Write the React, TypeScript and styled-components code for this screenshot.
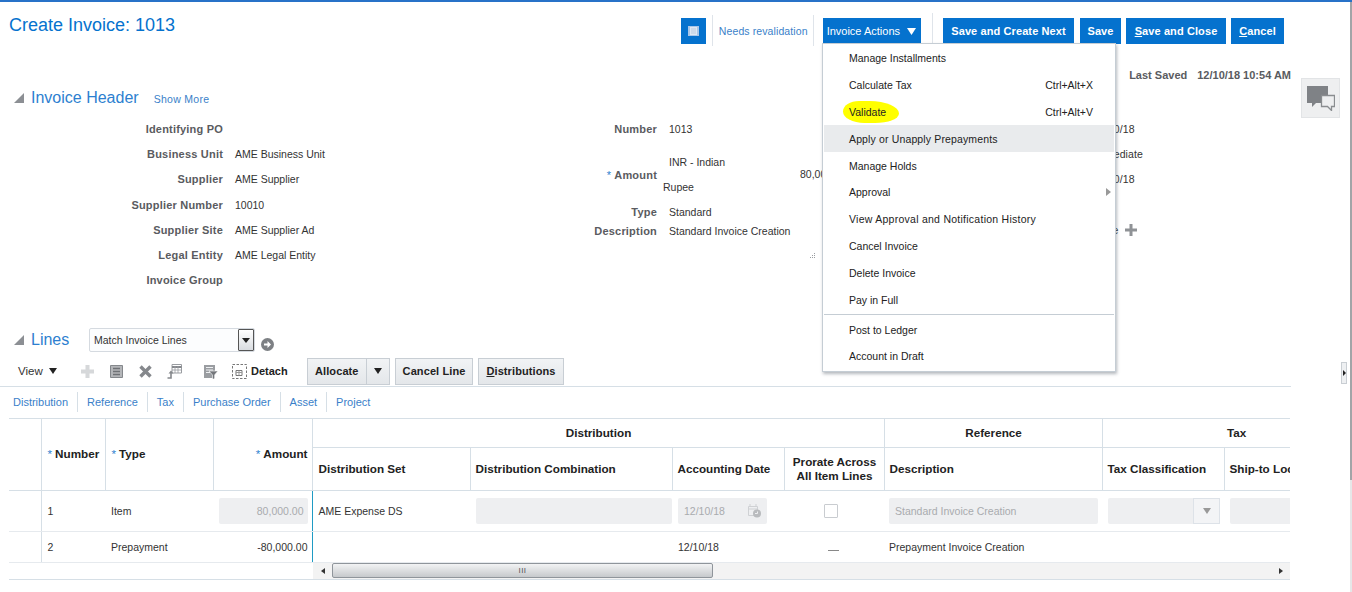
import React from "react";
import styled, { createGlobalStyle } from "styled-components";

const Global = createGlobalStyle`
  html, body { margin: 0; padding: 0; background: #fff; }
  body { font-family: "Liberation Sans", Arial, sans-serif; font-size: 11px; color: #333; }
`;

const Page = styled.div`
  position: relative;
  width: 1352px;
  height: 592px;
  overflow: hidden;
  border-top: 2px solid #2872c8;
  box-sizing: border-box;
`;

const Main = styled.div`
  width: 1291px;
`;

const TitleBar = styled.div`
  display: flex;
  height: 44px;
`;

const Title = styled.h1`
  margin: 13px 0 0 9px;
  font-size: 18px;
  line-height: 20px;
  font-weight: 400;
  color: #0572ce;
`;

const Actions = styled.div`
  margin-left: auto;
  margin-right: 7px;
  padding-top: 16px;
  display: flex;
  align-items: flex-start;
`;

const BlueButton = styled.button<{ $ml?: number; $w: number }>`
  height: 26px;
  width: ${(p) => p.$w}px;
  padding: 0;
  margin-left: ${(p) => p.$ml ?? 6}px;
  background: #0572ce;
  border: 0;
  color: #fff;
  font: 700 11px "Liberation Sans", Arial, sans-serif;
  letter-spacing: 0.1px;
  white-space: nowrap;
`;

const IconButton = styled.button`
  width: 25px;
  height: 26px;
  padding: 0;
  background: #0572ce;
  border: 0;
  display: flex;
  align-items: center;
  justify-content: center;
`;

const Status = styled.div`
  margin-left: 6px;
  height: 31px;
  padding: 0 5px 0 6px;
  display: flex;
  align-items: center;
  border-left: 1px solid #dfe4ea;
  border-right: 1px solid #dfe4ea;
  color: #3a7fc9;
  font-size: 10.5px;
  letter-spacing: 0.1px;
  margin-top: -3px;
`;

const MenuButton = styled.button`
  height: 26px;
  margin-left: 9px;
  padding: 0 5px 0 4px;
  display: flex;
  align-items: center;
  gap: 7px;
  background: #0572ce;
  border: 0;
  color: #fff;
  font: 400 11px "Liberation Sans", Arial, sans-serif;
`;

const Divider = styled.div`
  width: 1px;
  height: 36px;
  margin: -5px 0 0 11px;
  background: #dfe4ea;
`;

const SavedRow = styled.div`
  display: flex;
  justify-content: flex-end;
  height: 26px;
  margin-top: 16px;
  align-items: center;
  gap: 10px;
  font-weight: 700;
  color: #5a5b60;
  white-space: nowrap;
`;

const SectionHead = styled.div`
  display: flex;
  align-items: center;
  padding-left: 14px;
`;

const Disclosure = styled.span`
  width: 0;
  height: 0;
  border-style: solid;
  border-width: 0 0 10px 10px;
  border-color: transparent transparent #8c8f94 transparent;
`;

const SectionTitle = styled.h2`
  margin: 0 0 0 7px;
  font-size: 16px;
  line-height: 20px;
  font-weight: 400;
  color: #2d7fd0;
`;

const ShowMore = styled.a`
  margin-left: 15px;
  padding-top: 2px;
  font-size: 10.5px;
  color: #3a7fc9;
  letter-spacing: 0.3px;
`;

const FormGrid = styled.div`
  display: grid;
  grid-template-columns: 434px 424px 1fr;
  height: 219px;
  padding-top: 8.4px;
  box-sizing: border-box;
`;

const FormCol = styled.div`
  display: flex;
  flex-direction: column;
`;

const FormRow = styled.div<{ $h?: number }>`
  display: grid;
  grid-template-columns: 223px 1fr;
  column-gap: 12px;
  align-items: center;
  height: ${(p) => p.$h ?? 25.2}px;
  white-space: nowrap;
`;

const Label = styled.div`
  text-align: right;
  font-weight: 700;
  color: #5a5b60;
  letter-spacing: 0.2px;
`;

const AmountLabel = styled(Label)`
  padding-top: 2px;
`;

const Required = styled.span`
  color: #2d7fd0;
  font-weight: 400;
  margin-right: 3px;
`;

const Value = styled.div`
  color: #333;
  font-size: 10.5px;
`;

const AmountValue = styled.div`
  position: relative;
  margin-top: 3px;
  line-height: 25px;
  height: 50px;
  font-size: 10.5px;
`;

const CurrencyLine = styled.div<{ $out?: boolean }>`
  margin-left: ${(p) => (p.$out ? -6 : 0)}px;
`;

const AmountNumber = styled.span`
  position: absolute;
  left: 131px;
  top: 12px;
`;

const ThirdCol = styled(FormCol)`
  padding-left: 235px;
  font-size: 10.5px;
`;

const ThirdValue = styled.div`
  height: 25.2px;
  display: flex;
  align-items: center;
  gap: 6px;
  white-space: nowrap;
  letter-spacing: 0.1px;
`;

const Grip = styled.svg`
  position: absolute;
  left: 808px;
  top: 250px;
`;

const LinesHead = styled.div`
  display: flex;
  align-items: center;
  height: 26px;
  padding-left: 14px;
`;

const LinesTitle = styled.h2`
  margin: 0 0 0 7px;
  width: 58px;
  font-size: 16px;
  line-height: 20px;
  font-weight: 400;
  color: #2d7fd0;
`;

const SelectBox = styled.div`
  width: 166px;
  height: 24px;
  box-sizing: border-box;
  border: 1px solid #d5dae0;
  border-radius: 2px;
  display: flex;
  align-items: center;
  justify-content: space-between;
  padding-left: 4px;
  background: #fcfdfe;
  font-size: 10.5px;
  color: #333;
`;

const SelectArrow = styled.span`
  width: 16px;
  height: 22px;
  box-sizing: border-box;
  border: 1px solid #555;
  border-radius: 1px;
  background: linear-gradient(#fff, #d9dce0);
  display: flex;
  align-items: center;
  justify-content: center;
  &::after {
    content: "";
    border-style: solid;
    border-width: 5px 4px 0;
    border-color: #222 transparent transparent;
  }
`;

const GoIcon = styled.svg`
  margin: 8px 0 0 6px;
`;

const Toolbar = styled.div`
  display: flex;
  align-items: center;
  height: 28px;
  margin-top: 4px;
  padding: 0 0 1px 18px;
  border-bottom: 1px solid #d6dfe6;
  box-sizing: content-box;
`;

const ViewMenu = styled.div`
  display: flex;
  align-items: center;
  gap: 6px;
  width: 62px;
  color: #333;
  font-size: 11.5px;
`;

const Caret = styled.span`
  border-style: solid;
  border-width: 6px 4px 0;
  border-color: #222 transparent transparent;
  display: inline-block;
`;

const ToolIcon = styled.svg<{ $mr?: number }>`
  width: 15px;
  height: 15px;
  flex: none;
  margin-right: ${(p) => p.$mr ?? 14}px;
`;

const Detach = styled.div`
  display: flex;
  align-items: center;
  gap: 4px;
  font-weight: 700;
  color: #222;
  width: 74px;
`;

const GreyButton = styled.button<{ $ml?: number }>`
  height: 27px;
  padding: 0 7px;
  margin-left: ${(p) => p.$ml ?? 5}px;
  box-sizing: border-box;
  background: linear-gradient(#f1f3f5, #e4e7ea);
  border: 1px solid #c8ced4;
  font: 700 11px "Liberation Sans", Arial, sans-serif;
  letter-spacing: 0.1px;
  color: #222;
  display: flex;
  align-items: center;
`;

const SplitArrow = styled.span`
  display: flex;
  align-items: center;
  height: 100%;
  margin-left: 7px;
  padding-left: 7px;
  border-left: 1px solid #c8ced4;
`;

const TabLinks = styled.div`
  display: flex;
  align-items: center;
  height: 29px;
  padding: 0 0 2px 4px;
`;

const TabLink = styled.a`
  padding: 0 9px;
  height: 20px;
  line-height: 20px;
  font-size: 11px;
  color: #3a7fc9;
  border-left: 1px solid #d6dfe6;
  &:first-child { border-left: 0; }
`;

const TableWrap = styled.div`
  margin-left: 9px;
  width: 1281px;
  overflow: hidden;
  border-top: 1px solid #d6dfe6;
`;

const Table = styled.table`
  width: 1361px;
  table-layout: fixed;
  border-collapse: collapse;
`;

const HeadRow = styled.tr<{ $h: number }>`
  height: ${(p) => p.$h}px;
`;

const Th = styled.th<{ $align?: string; $pl?: number }>`
  border: 1px solid #d6dfe6;
  border-top: 0;
  font: 700 11.7px/14px "Liberation Sans", Arial, sans-serif;
  color: #222;
  padding: 0 4px 0 ${(p) => p.$pl ?? 5}px;
  text-align: ${(p) => p.$align ?? "left"};
  white-space: nowrap;
  overflow: hidden;
  &:first-child { border-left: 0; }
`;

const Td = styled.td<{ $align?: string; $flushRight?: boolean; $pl?: number }>`
  border: 0;
  border-bottom: 1px solid #e6eaee;
  padding: 0 ${(p) => (p.$flushRight ? 0 : 4)}px 0 ${(p) => p.$pl ?? 6}px;
  font-size: 10.5px;
  color: #333;
  text-align: ${(p) => p.$align ?? "left"};
  white-space: nowrap;
  overflow: hidden;
  &:nth-child(2) { border-left: 1px solid #d6dfe6; }
`;

const FreezeTd = styled(Td)`
  border-left: 1px solid #1f9bc4;
`;

const DisabledField = styled.div<{ $w?: number; $align?: string }>`
  height: 26px;
  width: ${(p) => (p.$w ? `${p.$w}px` : "100%")};
  box-sizing: border-box;
  background: #eeeff1;
  border-radius: 2px;
  color: #a9abae;
  display: flex;
  align-items: center;
  justify-content: ${(p) => p.$align ?? "flex-start"};
  padding: 0 4px 0 6px;
`;

const CalendarIcon = styled.svg`
  margin-left: auto;
  margin-right: 2px;
`;

const CheckBox = styled.span`
  display: block;
  width: 12px;
  height: 12px;
  margin-left: 34px;
  border: 1px solid #c9ccd0;
  border-radius: 1px;
  background: #fff;
`;

const Dash = styled.span`
  display: block;
  width: 11px;
  height: 1px;
  margin: 7px 0 0 38px;
  background: #888;
`;

const DropChoice = styled.span`
  margin-left: auto;
  width: 27px;
  height: 26px;
  margin-right: -4px;
  border: 1px solid #dde2e8;
  box-sizing: border-box;
  background: #f3f4f6;
  display: flex;
  align-items: center;
  justify-content: center;
  &::after {
    content: "";
    border-style: solid;
    border-width: 6px 4px 0;
    border-color: #999 transparent transparent;
  }
`;

const ScrollRow = styled.div`
  margin-left: 9px;
  width: 1281px;
  height: 17px;
  box-sizing: border-box;
  padding-left: 304px;
  border-bottom: 1px solid #d6dfe6;
`;

const ScrollTrack = styled.div`
  height: 16px;
  display: flex;
  align-items: center;
  background: #f3f3f3;
`;

const ScrollEnd = styled.span<{ $right?: boolean }>`
  width: 19px;
  margin-left: ${(p) => (p.$right ? "auto" : "0")};
  display: flex;
  justify-content: center;
  &::after {
    content: "";
    border-style: solid;
    border-width: ${(p) => (p.$right ? "3px 0 3px 4px" : "3px 4px 3px 0")};
    border-color: ${(p) => (p.$right ? "transparent transparent transparent #333" : "transparent #333 transparent transparent")};
  }
`;

const ScrollThumb = styled.div`
  width: 381px;
  height: 15px;
  box-sizing: border-box;
  border: 1px solid #8f959b;
  border-radius: 2px;
  background: linear-gradient(#f2f3f4, #c6c9cc);
  display: flex;
  align-items: center;
  justify-content: center;
  color: #555;
  font-size: 8px;
  letter-spacing: 0.5px;
`;

const Menu = styled.div`
  position: absolute;
  left: 822px;
  top: 41px;
  width: 294px;
  height: 329px;
  box-sizing: border-box;
  background: #fff;
  border: 1px solid #c5cdd4;
  box-shadow: 1px 2px 3px rgba(90, 100, 110, 0.45);
  padding: 1px 1px 0;
  color: #222;
`;

const MenuItem = styled.div<{ $active?: boolean; $h?: number; $ls?: number }>`
  position: relative;
  height: ${(p) => p.$h ?? 26.8}px;
  display: flex;
  align-items: center;
  justify-content: space-between;
  padding: 0 21px 0 25px;
  background: ${(p) => (p.$active ? "#e9ebed" : "transparent")};
  font-size: 10.5px;
  letter-spacing: ${(p) => p.$ls ?? 0}px;
  white-space: nowrap;
`;

const Highlighted = styled.span`
  position: relative;
  z-index: 0;
  &::before {
    content: "";
    position: absolute;
    z-index: -1;
    left: -6px;
    top: -5px;
    width: 56px;
    height: 22px;
    border-radius: 30% 55% 45% 40% / 50% 60% 45% 55%;
    background: #ffff00;
  }
`;

const SubArrow = styled.span`
  position: absolute;
  right: 3px;
  top: 9px;
  border-style: solid;
  border-width: 4px 0 4px 5px;
  border-color: transparent transparent transparent #999;
`;

const MenuSep = styled.div`
  height: 1px;
  background: #c5cdd4;
  margin: 1px 0 2px;
`;

const CommentButton = styled.div`
  position: absolute;
  left: 1301px;
  top: 76px;
  width: 39px;
  height: 40px;
  box-sizing: border-box;
  background: #eeeff0;
  border: 1px solid #e2e4e6;
  display: flex;
  align-items: center;
  justify-content: center;
`;

const SplitterHandle = styled.div`
  position: absolute;
  left: 1341px;
  top: 360px;
  width: 6px;
  height: 22px;
  box-sizing: border-box;
  background: #eef0f2;
  border: 1px solid #c9ced3;
  display: flex;
  align-items: center;
  justify-content: center;
  &::after {
    content: "";
    border-style: solid;
    border-width: 3px 0 3px 3px;
    border-color: transparent transparent transparent #222;
  }
`;

const WindowEdge = styled.div`
  position: absolute;
  left: 1349px;
  top: -2px;
  bottom: 0;
  width: 2px;
  border-left: 1px solid #fff;
  background: linear-gradient(#a2a4a7 0, #a2a4a7 480px, #e6e7e8 480px);
`;

const leftRows: [string, string][] = [
  ["Identifying PO", ""],
  ["Business Unit", "AME Business Unit"],
  ["Supplier", "AME Supplier"],
  ["Supplier Number", "10010"],
  ["Supplier Site", "AME Supplier Ad"],
  ["Legal Entity", "AME Legal Entity"],
  ["Invoice Group", ""],
];

const tabs = ["Distribution", "Reference", "Tax", "Purchase Order", "Asset", "Project"];
const colWidths = [32, 64, 108, 99, 158, 202, 112, 100, 218, 122, 146];

export default function App() {
  return (
    <Page>
      <Global />
      <Main>
        <TitleBar>
          <Title>Create Invoice: 1013</Title>
          <Actions>
            <IconButton aria-label="Layout">
              <svg width="11" height="10" viewBox="0 0 11 10">
                <rect width="11" height="10" fill="#a9c6e8" />
                <rect x="2" y="1" width="7" height="8" fill="#dfe8f3" />
                <path d="M3 3h5M3 5h5M3 7h5" stroke="#b9cbe0" />
              </svg>
            </IconButton>
            <Status>Needs revalidation</Status>
            <MenuButton>
              Invoice Actions
              <svg width="9" height="7" viewBox="0 0 9 7"><path d="M0 0h9L4.5 7z" fill="#fff" /></svg>
            </MenuButton>
            <Divider />
            <BlueButton $ml={10} $w={131}>Save and Create Next</BlueButton>
            <BlueButton $w={41}>Save</BlueButton>
            <BlueButton $ml={5} $w={100}><u>S</u>ave and Close</BlueButton>
            <BlueButton $ml={5} $w={53}><u>C</u>ancel</BlueButton>
          </Actions>
        </TitleBar>

        <SavedRow>
          <span>Last Saved</span>
          <span>12/10/18 10:54 AM</span>
        </SavedRow>

        <SectionHead>
          <Disclosure />
          <SectionTitle>Invoice Header</SectionTitle>
          <ShowMore>Show More</ShowMore>
        </SectionHead>

        <FormGrid>
          <FormCol>
            {leftRows.map(([l, v]) => (
              <FormRow key={l}>
                <Label>{l}</Label>
                <Value>{v}</Value>
              </FormRow>
            ))}
          </FormCol>
          <FormCol>
            <FormRow>
              <Label>Number</Label>
              <Value>1013</Value>
            </FormRow>
            <FormRow $h={64}>
              <AmountLabel><Required>*</Required>Amount</AmountLabel>
              <AmountValue>
                <CurrencyLine>INR - Indian</CurrencyLine>
                <CurrencyLine $out>Rupee</CurrencyLine>
                <AmountNumber>80,000.00</AmountNumber>
              </AmountValue>
            </FormRow>
            <FormRow $h={13}>
              <Label>Type</Label>
              <Value>Standard</Value>
            </FormRow>
            <FormRow $h={25}>
              <Label>Description</Label>
              <Value>Standard Invoice Creation</Value>
            </FormRow>
          </FormCol>
          <ThirdCol>
            <ThirdValue>12/10/18</ThirdValue>
            <ThirdValue>Immediate</ThirdValue>
            <ThirdValue>12/10/18</ThirdValue>
            <ThirdValue />
            <ThirdValue>
              None
              <svg width="12" height="12" viewBox="0 0 12 12"><path d="M4.5 0h3v4.5H12v3H7.5V12h-3V7.5H0v-3h4.5z" fill="#8f9296" /></svg>
            </ThirdValue>
          </ThirdCol>
        </FormGrid>

        <LinesHead>
          <Disclosure />
          <LinesTitle>Lines</LinesTitle>
          <SelectBox>
            Match Invoice Lines
            <SelectArrow />
          </SelectBox>
          <GoIcon width="13" height="13" viewBox="0 0 13 13">
            <circle cx="6.5" cy="6.5" r="6.5" fill="#7d8084" />
            <path d="M3 5.5h3.5V3l3.5 3.5L6.5 10V7.5H3z" fill="#fff" />
          </GoIcon>
        </LinesHead>

        <Toolbar>
          <ViewMenu>View <Caret /></ViewMenu>
          <ToolIcon viewBox="0 0 15 15">
            <path d="M5.5 1h4v4.5H14v4H9.5V14h-4V9.5H1v-4h4.5z" fill="#d6d8da" />
          </ToolIcon>
          <ToolIcon viewBox="0 0 15 15">
            <path d="M1.5 1.5h12v12h-12z" fill="#b4b6b9" stroke="#85888c" />
            <path d="M4 4.5h7M4 7.5h7M4 10.5h7" stroke="#6f7276" strokeWidth="1.3" />
          </ToolIcon>
          <ToolIcon viewBox="0 0 15 15">
            <path d="M2.5 2.5l10 10M12.5 2.5l-10 10" stroke="#85888c" strokeWidth="3.4" />
          </ToolIcon>
          <ToolIcon viewBox="0 0 15 15" $mr={21}>
            <path d="M5 .5h9.5v8.5H5z" fill="#fff" stroke="#9a9da1" />
            <path d="M5 3h9.5" stroke="#85888c" strokeWidth="2" />
            <path d="M5 6h9.5M8 2v7M11 2v7" stroke="#9a9da1" strokeWidth=".8" />
            <path d="M.5 14h3.5V9" fill="none" stroke="#85888c" strokeWidth="1.6" />
            <path d="M1.5 9.5L4 6.5l2.5 3z" fill="#85888c" />
          </ToolIcon>
          <ToolIcon viewBox="0 0 15 15">
            <path d="M1 1h11v13H1z" fill="#9a9da1" />
            <path d="M3 3.5h7M3 6h7M3 8.5h4" stroke="#eef0f2" />
            <path d="M6 7h9l-3.5 4v4h-2v-4z" fill="#74777b" stroke="#fff" strokeWidth=".6" />
          </ToolIcon>
          <Detach>
            <svg width="15" height="15" viewBox="0 0 15 15">
              <rect x=".5" y=".5" width="14" height="14" fill="none" stroke="#777" strokeDasharray="2.5 1.5" />
              <path d="M4 6.5h6v5H4z" fill="#fff" stroke="#777" />
              <path d="M4 8.5h6M7 6.5v5" stroke="#999" />
            </svg>
            Detach
          </Detach>
          <GreyButton $ml={1}>
            Allocate
            <SplitArrow><Caret /></SplitArrow>
          </GreyButton>
          <GreyButton><span>Cancel Line</span></GreyButton>
          <GreyButton><span><u>D</u>istributions</span></GreyButton>
        </Toolbar>

        <TabLinks>
          {tabs.map((t) => <TabLink key={t}>{t}</TabLink>)}
        </TabLinks>

        <TableWrap>
          <Table>
            <colgroup>
              {colWidths.map((w, i) => <col key={i} width={w} />)}
            </colgroup>
            <thead>
              <HeadRow $h={28}>
                <Th rowSpan={2} />
                <Th rowSpan={2} $pl={6}><Required>*</Required>Number</Th>
                <Th rowSpan={2} $pl={6}><Required>*</Required>Type</Th>
                <Th rowSpan={2} $align="right"><Required>*</Required>Amount</Th>
                <Th colSpan={4} $align="center">Distribution</Th>
                <Th $align="center">Reference</Th>
                <Th colSpan={2} $align="center">Tax</Th>
              </HeadRow>
              <HeadRow $h={43}>
                <Th $pl={6}>Distribution Set</Th>
                <Th>Distribution Combination</Th>
                <Th>Accounting Date</Th>
                <Th $align="center">Prorate Across<br />All Item Lines</Th>
                <Th>Description</Th>
                <Th>Tax Classification</Th>
                <Th>Ship-to Location</Th>
              </HeadRow>
            </thead>
            <tbody>
              <HeadRow $h={41}>
                <Td />
                <Td>1</Td>
                <Td>Item</Td>
                <Td $align="right"><DisabledField $align="flex-end">80,000.00</DisabledField></Td>
                <FreezeTd>AME Expense DS</FreezeTd>
                <Td $flushRight><DisabledField /></Td>
                <Td>
                  <DisabledField $w={89}>
                    12/10/18
                    <CalendarIcon width="14" height="15" viewBox="0 0 14 15">
                      <path d="M1.5 3.5h9v9h-9z" fill="none" stroke="#cfd1d4" />
                      <path d="M3 1v3M9 1v3M2 6h8" stroke="#cfd1d4" />
                      <circle cx="10" cy="10.5" r="4" fill="#b9bbbe" />
                      <path d="M8 10.5h2.5v-2" fill="none" stroke="#eeeff1" />
                    </CalendarIcon>
                  </DisabledField>
                </Td>
                <Td><CheckBox /></Td>
                <Td $pl={5}><DisabledField>Standard Invoice Creation</DisabledField></Td>
                <Td><DisabledField><DropChoice /></DisabledField></Td>
                <Td><DisabledField /></Td>
              </HeadRow>
              <HeadRow $h={31}>
                <Td />
                <Td>2</Td>
                <Td>Prepayment</Td>
                <Td $align="right">-80,000.00</Td>
                <FreezeTd />
                <Td />
                <Td>12/10/18</Td>
                <Td><Dash /></Td>
                <Td $pl={5}>Prepayment Invoice Creation</Td>
                <Td />
                <Td />
              </HeadRow>
            </tbody>
          </Table>
        </TableWrap>
        <ScrollRow>
          <ScrollTrack>
            <ScrollEnd />
            <ScrollThumb>III</ScrollThumb>
            <ScrollEnd $right />
          </ScrollTrack>
        </ScrollRow>
      </Main>

      <Grip width="8" height="8" viewBox="0 0 8 8">
        <path d="M6 1h1v1H6zM4 3h1v1H4zM6 3h1v1H6zM2 5h1v1H2zM4 5h1v1H4zM6 5h1v1H6z" fill="#9a9da1" />
      </Grip>

      <Menu>
        <MenuItem>Manage Installments</MenuItem>
        <MenuItem><span>Calculate Tax</span><span>Ctrl+Alt+X</span></MenuItem>
        <MenuItem><Highlighted>Validate</Highlighted><span>Ctrl+Alt+V</span></MenuItem>
        <MenuItem $active $ls={0.14}>Apply or Unapply Prepayments</MenuItem>
        <MenuItem>Manage Holds</MenuItem>
        <MenuItem>Approval<SubArrow /></MenuItem>
        <MenuItem $ls={0.26}>View Approval and Notification History</MenuItem>
        <MenuItem>Cancel Invoice</MenuItem>
        <MenuItem>Delete Invoice</MenuItem>
        <MenuItem>Pay in Full</MenuItem>
        <MenuSep />
        <MenuItem $h={26}>Post to Ledger</MenuItem>
        <MenuItem $h={26}>Account in Draft</MenuItem>
      </Menu>

      <CommentButton>
        <svg width="28" height="25" viewBox="0 0 28 25">
          <path d="M0 0h21v17H9l-4 4v-4H0z" fill="#7f8286" />
          <path d="M14.5 9.5h13v11h-3v4l-4-4h-6z" fill="#eeeff0" stroke="#8a8d90" strokeWidth="1.3" />
        </svg>
      </CommentButton>
      <SplitterHandle />
      <WindowEdge />
    </Page>
  );
}
